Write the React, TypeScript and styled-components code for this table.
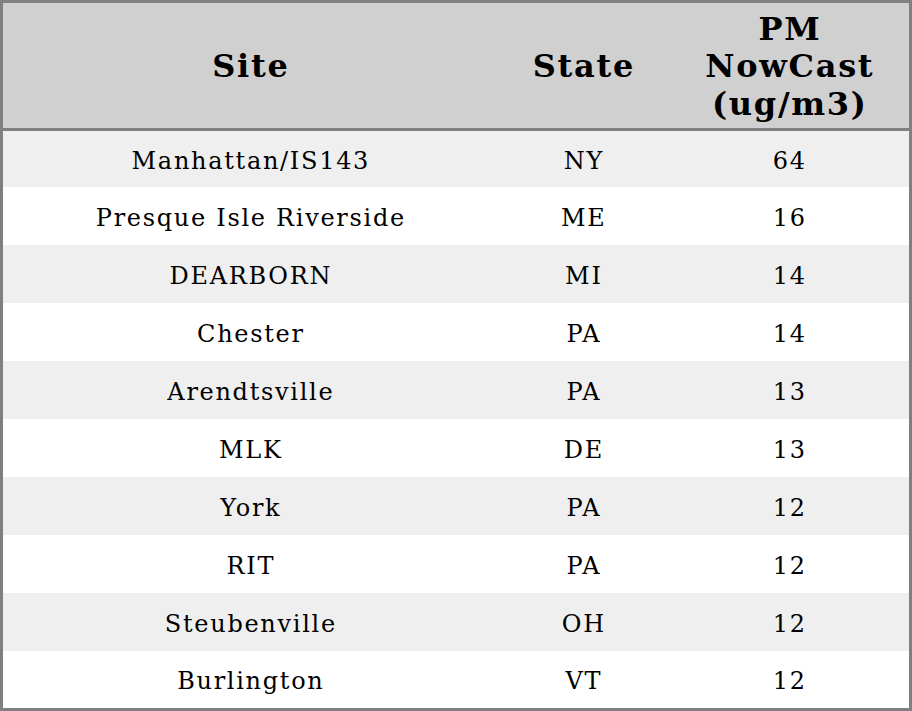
import styled, { createGlobalStyle } from "styled-components";

const GlobalStyle = createGlobalStyle`
  html, body {
    margin: 0;
    padding: 0;
    background: #ffffff;
  }
`;

type Reading = {
  site: string;
  state: string;
  pm: number;
};

const readings: Reading[] = [
  { site: "Manhattan/IS143", state: "NY", pm: 64 },
  { site: "Presque Isle Riverside", state: "ME", pm: 16 },
  { site: "DEARBORN", state: "MI", pm: 14 },
  { site: "Chester", state: "PA", pm: 14 },
  { site: "Arendtsville", state: "PA", pm: 13 },
  { site: "MLK", state: "DE", pm: 13 },
  { site: "York", state: "PA", pm: 12 },
  { site: "RIT", state: "PA", pm: 12 },
  { site: "Steubenville", state: "OH", pm: 12 },
  { site: "Burlington", state: "VT", pm: 12 },
];

const App = () => {
  return (
    <>
      <GlobalStyle />
      <Table>
        <colgroup>
          <col style={{ width: 494 }} />
          <col style={{ width: 172 }} />
          <col style={{ width: 240 }} />
        </colgroup>
        <thead>
          <tr>
            <HeadCell>Site</HeadCell>
            <HeadCell>State</HeadCell>
            <HeadCell>
              PM
              <br />
              NowCast
              <br />
              (ug/m3)
            </HeadCell>
          </tr>
        </thead>
        <tbody>
          {readings.map((r, i) => (
            <Row key={r.site} $shaded={i % 2 === 0}>
              <Cell>{r.site}</Cell>
              <Cell>{r.state}</Cell>
              <Cell>{r.pm}</Cell>
            </Row>
          ))}
        </tbody>
      </Table>
    </>
  );
};

const Table = styled.table`
  width: 912px;
  box-sizing: border-box;
  border-collapse: separate;
  border-spacing: 0;
  table-layout: fixed;
  border: 3px solid #808080;
  font-family: "DejaVu Serif", serif;
  color: #000;
`;

const HeadCell = styled.th`
  box-sizing: border-box;
  height: 128px;
  padding: 3px 0 0 1.7px;
  background: #d0d0d0;
  border-bottom: 3px solid #808080;
  font-size: 32px;
  font-weight: bold;
  letter-spacing: 1.7px;
  line-height: 37.5px;
  text-align: center;
  vertical-align: middle;
`;

const Row = styled.tr<{ $shaded: boolean }>`
  background: ${(p) => (p.$shaded ? "#efefef" : "#ffffff")};
  height: 58px;

  &:first-child {
    height: 56px;
  }

  &:last-child {
    height: 57px;
  }
`;

const Cell = styled.td`
  padding: 3px 0 0 1.7px;
  font-size: 24px;
  letter-spacing: 1.7px;
  text-align: center;
  vertical-align: middle;
`;

export default App;
